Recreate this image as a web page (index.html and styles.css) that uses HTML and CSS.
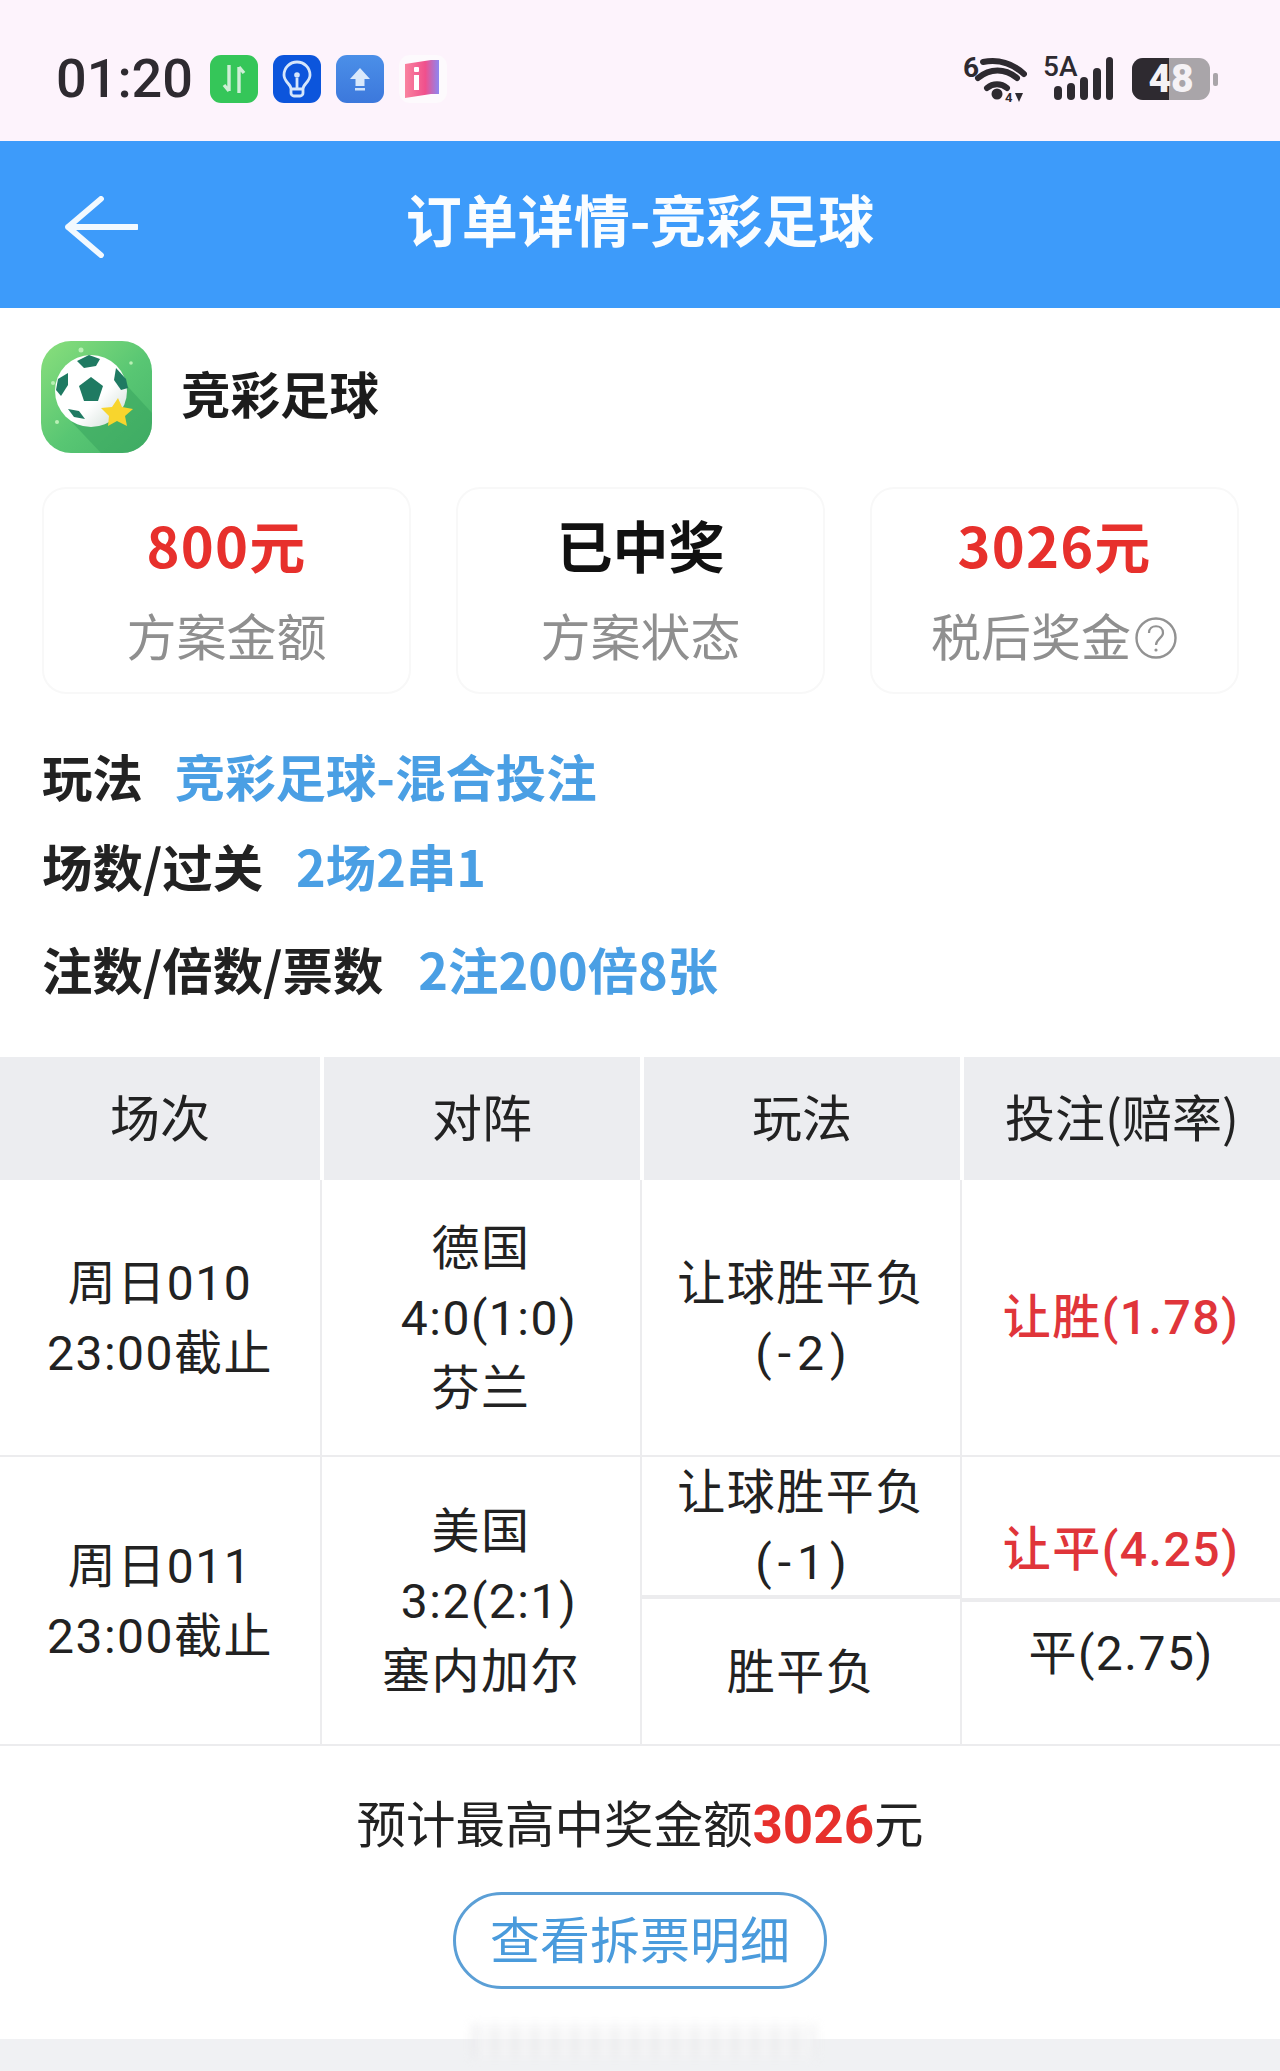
FILE: index.html
```html
<!DOCTYPE html>
<html lang="zh-CN">
<head>
<meta charset="utf-8">
<title>订单详情-竞彩足球</title>
<link rel="stylesheet" href="styles.css">
</head>
<body>
<div class="page">
  <div class="status">
    <div class="status-left">
      <span class="time">01:20</span>
      <svg class="app" viewBox="0 0 48 48"><rect width="48" height="48" rx="11" fill="#35c659"/><path d="M19 10v26M19 36l-5-6M29 38V12M29 12l5 6" fill="none" stroke="#cfeed6" stroke-width="3.4"/></svg>
      <svg class="app" viewBox="0 0 48 48"><rect width="48" height="48" rx="11" fill="#0c55dc"/><path d="M18 34c0-5-7-7-7-14a13 13 0 0 1 26 0c0 7-7 9-7 14v4a3 3 0 0 1-3 3h-6a3 3 0 0 1-3-3zM18 34h12M24 33v-10" fill="none" stroke="#d5e6fb" stroke-width="2.800"/><circle cx="24" cy="20" r="2.800" fill="#d5e6fb"/></svg>
      <svg class="app" viewBox="0 0 48 48"><defs><linearGradient id="up" x1="0" y1="0" x2="0" y2="1"><stop offset="0" stop-color="#4b8fe8"/><stop offset="1" stop-color="#3c78dc"/></linearGradient></defs><rect width="48" height="48" rx="11" fill="url(#up)"/><path d="M24 13l10 11h-5.500v7h-9v-7H14z" fill="#d8e8fb"/><rect x="19" y="33" width="10" height="2.500" fill="#cfe3fb"/></svg>
      <svg class="app" viewBox="0 0 48 48"><defs><linearGradient id="bk" x1="0" y1="0" x2="1" y2="0"><stop offset="0" stop-color="#f9839f"/><stop offset=".6" stop-color="#f0508c"/><stop offset="1" stop-color="#8d86f2"/></linearGradient></defs><rect width="48" height="48" rx="11" fill="#fdfafd"/><path d="M6 9l26-4h8v34h-8L6 43z" fill="url(#bk)"/><rect x="15" y="12" width="5" height="5" rx="1" fill="#fff"/><rect x="15" y="20" width="5" height="15" fill="#fff"/></svg>
    </div>
    <div class="status-right">
      <svg class="wifi" viewBox="-4 -10 68 66">
        <text x="0" y="20" class="sig-t">6</text>
        <g fill="none" stroke="#2e2a30" stroke-width="6" stroke-linecap="round">
          <path d="M20 5c15-3 29 1 41 12"/><path d="M15 21c12-10 27-10 39 0"/><path d="M24 31c6-5 14-5 20 0"/>
        </g>
        <circle cx="34" cy="37" r="5.500" fill="#2e2a30"/>
        <text x="42" y="45" class="sig-s">4</text>
        <path d="M52 36h8l-4 9z" fill="#2e2a30"/>
      </svg>
      <svg class="signal" viewBox="-4 -10 74 64">
        <text x="0" y="20" class="sig-t sig-5a">5A</text>
        <g fill="#2e2a30">
          <rect x="11" y="30" width="8" height="14" rx="4"/><rect x="24" y="27" width="8" height="17" rx="4"/><rect x="37" y="21" width="8" height="23" rx="4"/><rect x="50" y="12" width="8" height="32" rx="4"/><rect x="63" y="1" width="7" height="43" rx="3.500"/>
        </g>
      </svg>
      <div class="battery">
        <div class="batt-body"><div class="batt-fill"></div><span class="batt-num">48</span></div>
        <div class="batt-tip"></div>
      </div>
    </div>
  </div>

  <div class="header">
    <svg class="back" viewBox="0 0 76 64"><path d="M38 3L4 32l34 29M4 32h71" fill="none" stroke="#f2f9ff" stroke-width="6" stroke-linecap="round" stroke-linejoin="round"/></svg>
    <div class="title">订单详情-竞彩足球</div>
  </div>

  <div class="brand">
    <svg class="logo" viewBox="0 0 111 112">
      <defs>
        <linearGradient id="lg" x1="0" y1="0" x2="1" y2="1"><stop offset="0" stop-color="#8adf7c"/><stop offset=".55" stop-color="#58c673"/><stop offset="1" stop-color="#47b56a"/></linearGradient>
        <clipPath id="lc"><rect width="111" height="112" rx="30"/></clipPath>
        <linearGradient id="ball" x1="0" y1="0" x2="1" y2="1"><stop offset="0" stop-color="#fff"/><stop offset=".6" stop-color="#fff"/><stop offset="1" stop-color="#c9d8d0"/></linearGradient>
      </defs>
      <rect width="111" height="112" rx="30" fill="url(#lg)"/>
      <path d="M78 36L111 72V112H60L26 76z" fill="#38a45f" opacity=".55" clip-path="url(#lc)"/>
      <ellipse cx="50" cy="50" rx="36" ry="36" fill="url(#ball)"/>
      <g fill="#1f7a62">
        <path d="M50 36l12 9-5 15H43l-5-15z"/>
        <path d="M36 20l12-6 11 4-4 7-12 2z"/>
        <path d="M27 32v12l-7 11-5-6 2-11z"/>
        <path d="M75 27l10 11 2 9-7 2-7-10z"/>
        <path d="M27 68l11 2 6 8-11-2z"/>
      </g>
      <path d="M77 57l4 9 11 2-8 7 2 10-10-5-9 5 1-10-8-8 11-1z" fill="#f8d52d"/>
      <g fill="#b9f0b5"><circle cx="40" cy="9" r="2.500"/><circle cx="12" cy="42" r="2"/><circle cx="90" cy="22" r="1.800"/><circle cx="16" cy="81" r="2"/></g>
    </svg>
    <div class="brand-name">竞彩足球</div>
  </div>

  <div class="cards">
    <div class="card"><div class="card-value card-red">800元</div><div class="card-label">方案金额</div></div>
    <div class="card"><div class="card-value">已中奖</div><div class="card-label">方案状态</div></div>
    <div class="card"><div class="card-value card-red">3026元</div><div class="card-label">税后奖金<svg class="help" viewBox="0 0 44 44"><circle cx="22" cy="22" r="19.500" fill="none" stroke="#929292" stroke-width="2.400"/><path d="M15 17c0-9 14-9 14 0 0 5-7 6-7 12" fill="none" stroke="#929292" stroke-width="2.200"/><circle cx="22" cy="34" r="1.600" fill="#929292"/></svg></div></div>
  </div>

  <div class="info">
    <div class="info-row r1"><span class="k">玩法</span><span class="v">竞彩足球-混合投注</span></div>
    <div class="info-row r2"><span class="k">场数/过关</span><span class="v">2场2串1</span></div>
    <div class="info-row r3"><span class="k">注数/倍数/票数</span><span class="v">2注200倍8张</span></div>
  </div>

  <div class="thead">
    <div class="th">场次</div><div class="th">对阵</div><div class="th">玩法</div><div class="th">投注(赔率)</div>
  </div>
  <div class="row row-a">
    <div class="td"><div class="cell">周日010<br>23:00截止</div></div>
    <div class="td"><div class="cell">德国<br><span class="score">4:0(1:0)</span><br>芬兰</div></div>
    <div class="td"><div class="cell">让球胜平负<br><span class="hc">(-2)</span></div></div>
    <div class="td td-red">让胜(1.78)</div>
  </div>
  <div class="row row-b">
    <div class="td"><div class="cell">周日011<br>23:00截止</div></div>
    <div class="td"><div class="cell">美国<br><span class="score">3:2(2:1)</span><br>塞内加尔</div></div>
    <div class="td split">
      <div class="sub sub-pt">让球胜平负<br><span class="hc">(-1)</span></div>
      <div class="sub sub-pb">胜平负</div>
    </div>
    <div class="td split">
      <div class="sub sub-rt td-red">让平(4.25)</div>
      <div class="sub sub-rb">平(2.75)</div>
    </div>
  </div>

  <div class="summary">预计最高中奖金额<b class="sum-num">3026</b>元</div>
  <div class="btn-wrap"><div class="btn">查看拆票明细</div></div>
  <div class="band"></div>
  <div class="smear"></div>
</div>
</body>
</html>
```

FILE: styles.css
```css
* { box-sizing: border-box; }
html, body { margin: 0; padding: 0; background: #fff; }
body { font-family: "Roboto", "Noto Sans CJK SC", sans-serif; color: #222; }
.page { position: relative; width: 1280px; height: 2071px; overflow: hidden; background: #fff; }

.status { height: 141px; background: #fdf3fc; display: flex; justify-content: space-between; align-items: flex-start; padding: 55px 62px 0 57px; }
.status-left { display: flex; align-items: center; height: 48px; }
.time { font-size: 54px; font-weight: 500; line-height: 48px; color: #2e2a30; width: 154px; margin-left: -1px; }
.app { width: 48px; height: 48px; margin-right: 15px; }
.status-right { display: flex; align-items: flex-start; }
.wifi { width: 68px; height: 66px; margin: -8px 16px 0 -4px; }
.signal { width: 74px; height: 64px; margin: -9px 19px 0 -4px; }
.sig-t { font: 700 28px "Roboto", sans-serif; fill: #2e2a30; }
.sig-5a { font-weight: 500; }
.sig-s { font: 700 13px "Roboto", sans-serif; fill: #2e2a30; }
.battery { display: flex; align-items: center; height: 42px; margin-top: 3px; }
.batt-body { position: relative; width: 78px; height: 42px; border-radius: 11px; background: #a9a5a9; }
.batt-fill { width: 37px; height: 42px; background: #2e2a30; border-radius: 11px 0 0 11px; }
.batt-num { position: absolute; left: 0; right: 0; top: 0; text-align: center; font-size: 39px; font-weight: 900; line-height: 42px; color: #f5f2f5; }
.batt-tip { width: 5px; height: 13px; margin-left: 3px; border-radius: 2px; background: #a9a5a9; }

.header { position: relative; height: 167px; background: #3d9bfa; display: flex; align-items: center; justify-content: center; }
.back { position: absolute; left: 64px; top: 55px; width: 74px; height: 62px; }
.title { font-size: 56px; font-weight: 700; color: #fafdff; font-family: "Noto Sans CJK SC", sans-serif; line-height: 1; margin-top: -13px; }

.brand { display: flex; align-items: center; padding: 33px 0 0 41px; height: 145px; }
.logo { width: 111px; height: 112px; }
.brand-name { margin-left: 29px; font-size: 49.5px; font-weight: 700; color: #1c1c1c; font-family: "Noto Sans CJK SC", sans-serif; margin-top: -10px; }

.cards { display: flex; gap: 45px; padding: 34px 42px 0; }
.card { flex: 0 0 369px; height: 207px; border: 2px solid #f8f8f8; border-radius: 24px; text-align: center; padding-top: 20px; }
.card-value { font-size: 56px; font-weight: 700; line-height: 70px; color: #111; font-family: "Noto Sans CJK SC", sans-serif; }
.card-red { color: #e7302c; letter-spacing: 1.2px; }
.card-label { margin-top: 20px; font-size: 50px; line-height: 70px; color: #8f8f8f; font-family: "Noto Sans CJK SC", sans-serif; display: flex; justify-content: center; align-items: center; }
.help { width: 44px; height: 44px; margin: 7px 0 0 3px; }

.info { padding: 0 0 0 42px; height: 317px; }
.info-row { display: flex; align-items: center; height: 70px; font-size: 50.4px; font-weight: 700; font-family: "Noto Sans CJK SC", sans-serif; }
.r1 { margin-top: 46px; }
.r2 { margin-top: 20px; }
.r3 { margin-top: 33px; }
.k { color: #222; }
.v { color: #4a9fe4; margin-left: 35px; }
.r1 .v { margin-left: 32px; }
.r2 .v { margin-left: 33px; }

.thead, .row { display: grid; grid-template-columns: 320px 320px 320px 320px; }
.thead { height: 123px; }
.th { background: #ecedf0; font-size: 50px; line-height: 117px; text-align: center; color: #222; border-left: 4px solid #fff; font-family: "Noto Sans CJK SC", sans-serif; }
.th:first-child { border-left: 0; }
.row { border-bottom: 2px solid #ececee; }
.row-a { height: 277px; }
.row-b { height: 289px; }
.td { font-size: 48px; line-height: 70px; text-align: center; display: flex; align-items: center; justify-content: center; border-left: 2px solid #ececee; letter-spacing: 1.5px; }
.td:first-child { border-left: 0; }
.cell { padding-top: 2px; }
.score { padding-left: 16px; }
.hc { letter-spacing: 6px; padding-left: 6px; }
.td-red { color: #e0353a; font-weight: 500; }
.split { flex-direction: column; align-items: stretch; justify-content: flex-start; }
.sub { width: 100%; }
.sub-pt { height: 142px; padding-top: 1px; border-bottom: 4px solid #ececee; }
.sub-pb { padding-top: 39px; }
.sub-rt { height: 145px; padding-top: 58px; border-bottom: 4px solid #ececee; }
.sub-rb { padding-top: 17px; }

.summary { margin-top: 44px; text-align: center; font-size: 49.5px; line-height: 70px; color: #222; }
.sum-num { color: #e7302c; font-size: 53px; font-weight: 700; }
.btn-wrap { display: flex; justify-content: center; margin-top: 31px; }
.btn { width: 374px; height: 97px; border: 3px solid #5b9fd6; border-radius: 49px; color: #4a9bdc; font-size: 50px; line-height: 84px; text-align: center; font-family: "Noto Sans CJK SC", sans-serif; }
.band { position: absolute; left: 0; right: 0; top: 2039px; height: 32px; background: #f0f1f3; }
.smear { position: absolute; left: 472px; top: 2024px; width: 344px; height: 34px; background: repeating-linear-gradient(90deg, #e4e4e6 0 6px, #f7f7f8 6px 20px); filter: blur(5px); opacity: .6; }
```
